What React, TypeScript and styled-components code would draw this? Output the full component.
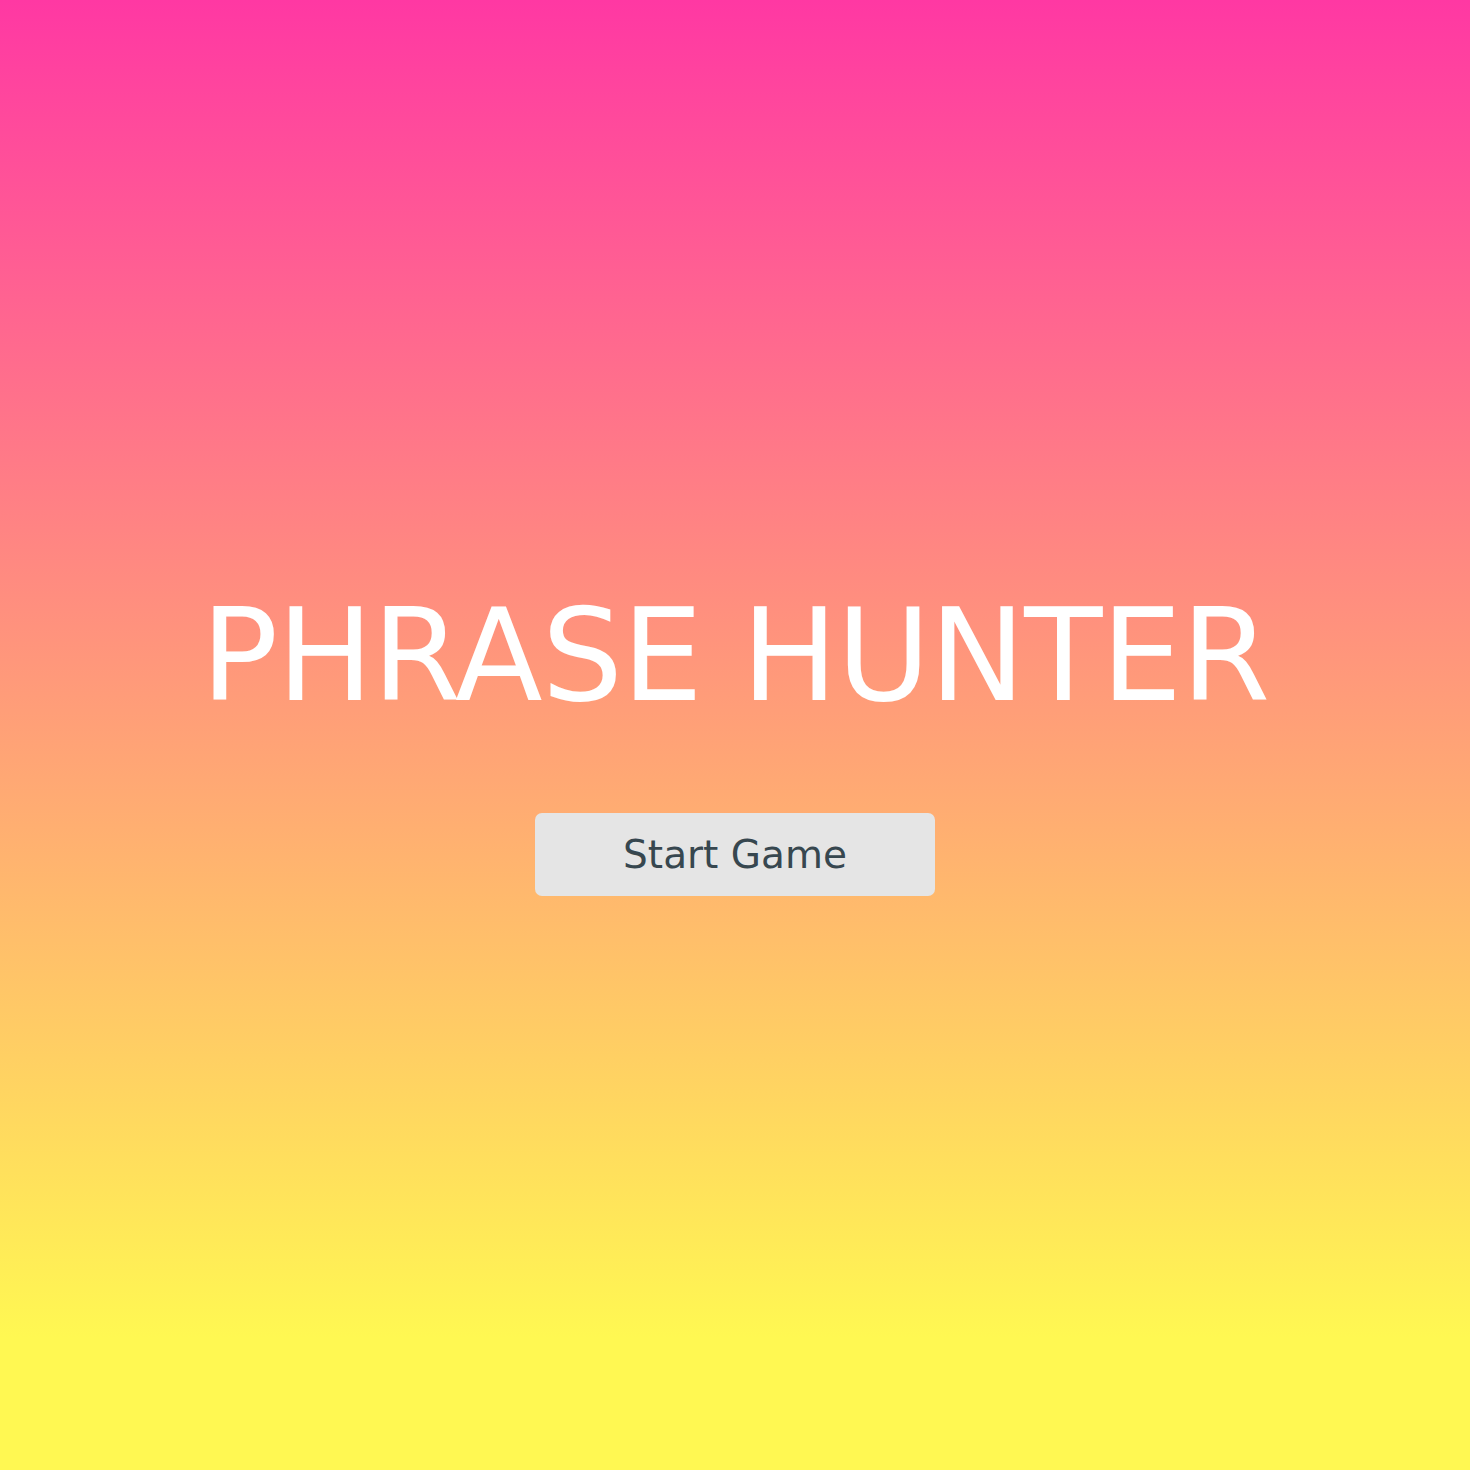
import React from "react";
import styled, { createGlobalStyle } from "styled-components";

const GlobalStyle = createGlobalStyle`
  html, body {
    margin: 0;
    padding: 0;
  }
  body {
    font-family: "DejaVu Sans", "Noto Sans", sans-serif;
  }
`;

const Overlay = styled.div`
  min-height: 100vh;
  display: flex;
  flex-direction: column;
  align-items: center;
  justify-content: center;
  padding-top: 18px;
  box-sizing: border-box;
  background: linear-gradient(to bottom, #ff38a3 0%, #fff852 91%, #fff852 100%);
`;

const Title = styled.h2`
  margin: 0 0 93px;
  font-size: 128px;
  font-weight: 400;
  line-height: 1;
  color: #ffffff;
  letter-spacing: -1px;
`;

const StartButton = styled.button`
  width: 400px;
  height: 83px;
  border: none;
  border-radius: 7px;
  background: #e5e5e5;
  color: #37474f;
  font-family: inherit;
  font-size: 39px;
  cursor: pointer;
`;

export default function App() {
  return (
    <>
      <GlobalStyle />
      <Overlay>
        <Title>PHRASE HUNTER</Title>
        <StartButton>Start Game</StartButton>
      </Overlay>
    </>
  );
}
